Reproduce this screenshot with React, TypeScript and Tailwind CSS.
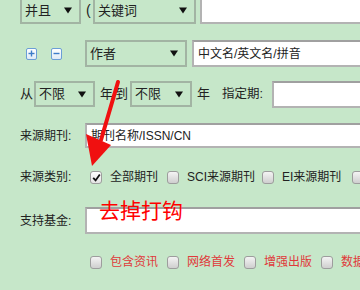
import React from 'react';

const Caret = () => (
  <svg width="8" height="7" viewBox="0 0 8 7" className="shrink-0">
    <path d="M0 0.5 H8 L4 6.5 Z" fill="#111" />
  </svg>
);

const Select: React.FC<{ label: string; className: string }> = ({ label, className }) => (
  <div
    className={`flex items-center justify-between border-2 border-[#a2b4a3] pl-[3px] pr-[7px] text-[13px] text-[#222] shrink-0 ${className}`}
  >
    <span>{label}</span>
    <Caret />
  </div>
);

const Input: React.FC<{ className: string; text?: string; children?: React.ReactNode }> = ({ className, text, children }) => (
  <div
    className={`relative flex items-center bg-white border-2 border-[#b3b3b3] border-t-[#a0a0a0] pl-[4px] text-[12px] text-[#222] shrink-0 whitespace-nowrap ${className}`}
  >
    {text}
    {children}
  </div>
);

const Box: React.FC<{ checked?: boolean }> = ({ checked }) => (
  <span
    className={`w-[12px] h-[13px] shrink-0 rounded-[3px] border border-[#9d9d9d] flex items-center justify-center ${
      checked ? 'bg-linear-to-b from-white to-[#e4e4e4]' : 'bg-linear-to-b from-[#f4f4f4] to-[#cfcfcf]'
    }`}
  >
    {checked && (
      <svg width="9" height="9" viewBox="0 0 9 9">
        <path d="M1.2 4.8 L3.6 7.4 L7.8 1.4" stroke="#111" strokeWidth="1.8" fill="none" />
      </svg>
    )}
  </span>
);

const Check: React.FC<{ label: string; checked?: boolean; red?: boolean; gap?: string }> = ({ label, checked, red, gap = 'mr-[9px]' }) => (
  <div className="flex items-center shrink-0">
    <Box checked={checked} />
    <span className={`ml-[8px] ${gap} shrink-0 whitespace-nowrap text-[12px] ${red ? 'text-[#e0393a]' : 'text-[#222]'}`}>{label}</span>
  </div>
);

const PlusMinus: React.FC<{ sign: string }> = ({ sign }) => (
  <span className="w-[11px] h-[12px] shrink-0 rounded-[2px] border border-[#6b9ed6] bg-linear-to-b from-white to-[#dfeaf6] flex items-center justify-center">
    <svg width="7" height="7" viewBox="0 0 7 7">
      <path d="M0.5 3.5 H6.5" stroke="#3d7cc9" strokeWidth="1.4" />
      {sign === '+' && <path d="M3.5 0.5 V6.5" stroke="#3d7cc9" strokeWidth="1.4" />}
    </svg>
  </span>
);

export default function App() {
  return (
    <div
      className="relative w-[360px] h-[290px] overflow-hidden bg-[#c6e7c9] text-[#333]"
      style={{ fontFamily: '"Liberation Sans", "Noto Sans CJK SC", sans-serif' }}
    >
      {/* row 1 */}
      <div className="flex items-center -mt-[3px] h-[27px] pl-[20px]">
        <Select label="并且" className="w-[61px] h-full" />
        <span className="ml-[5px] w-[7px] shrink-0 text-[14px] text-[#222]">(</span>
        <Select label="关键词" className="w-[103px] h-full" />
        <Input className="ml-[4px] w-[170px] h-full" />
      </div>

      {/* row 2 */}
      <div className="flex items-center mt-[16px] h-[27px] pl-[26px]">
        <PlusMinus sign="+" />
        <span className="ml-[14px] shrink-0">
          <PlusMinus sign="-" />
        </span>
        <Select label="作者" className="ml-[23px] w-[102px] h-full" />
        <Input className="ml-[5px] w-[170px] h-full" text="中文名/英文名/拼音" />
      </div>

      {/* row 3 */}
      <div className="flex items-center mt-[14px] h-[26px] pl-[20px] text-[13px] text-[#222]">
        <span className="w-[14px] shrink-0">从</span>
        <Select label="不限" className="w-[61px] h-full" />
        <span className="ml-[5px] w-[15px] shrink-0">年</span>
        <span className="w-[15px] shrink-0">到</span>
        <Select label="不限" className="w-[62px] h-full" />
        <span className="ml-[5px] w-[25px] shrink-0">年</span>
        <span className="w-[50px] shrink-0 text-[12.5px]">指定期:</span>
        <Input className="w-[100px] h-[27px]" />
      </div>

      {/* row 4 */}
      <div className="flex items-center mt-[16px] h-[25px] pl-[20px]">
        <span className="w-[65px] shrink-0 text-[12px] text-[#222]">来源期刊:</span>
        <Input className="w-[280px] h-full" text="期刊名称/ISSN/CN" />
      </div>

      {/* row 5 */}
      <div className="flex items-center mt-[20px] h-[18px] pl-[20px]">
        <span className="w-[70px] shrink-0 text-[12px] text-[#222]">来源类别:</span>
        <Check label="全部期刊" checked />
        <Check label="SCI来源期刊" gap="mr-[7px]" />
        <Check label="EI来源期刊" gap="mr-[11px]" />
        <Box />
      </div>

      {/* row 6 */}
      <div className="flex items-center mt-[21px] h-[27px] pl-[20px]">
        <span className="w-[65px] shrink-0 text-[12px] text-[#222]">支持基金:</span>
        <Input className="w-[280px] h-full">
          <span className="absolute left-[12px] -top-[9px] text-[21px] leading-none text-[#ff0000] whitespace-nowrap">
            去掉打钩
          </span>
        </Input>
      </div>

      {/* row 7 */}
      <div className="flex items-center mt-[19px] h-[18px] pl-[90px]">
        <Check label="包含资讯" red />
        <Check label="网络首发" red />
        <Check label="增强出版" red />
        <Check label="数据" red />
      </div>

      {/* annotation arrow */}
      <svg className="absolute inset-0 pointer-events-none" width="360" height="290" viewBox="0 0 360 290">
        <path d="M118 82 L101 140" stroke="#f01010" strokeWidth="4" strokeLinecap="round" />
        <path d="M86 134 L111 145 L92 166 Z" fill="#f01010" />
      </svg>
    </div>
  );
}
